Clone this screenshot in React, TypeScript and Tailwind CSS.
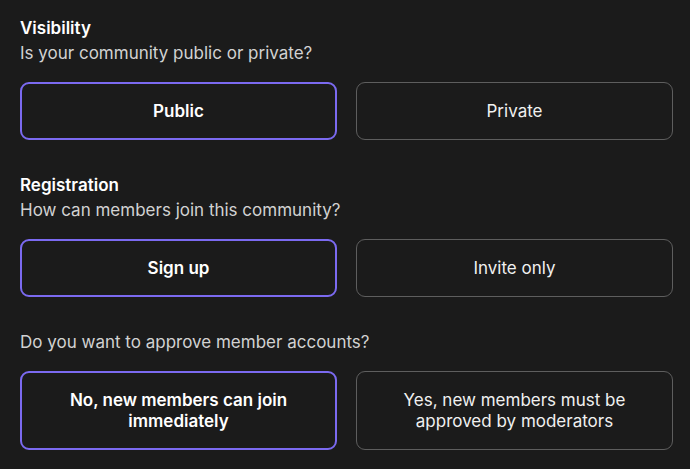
import { useState } from "react";

type Option = { value: string; label: string };

const sections: { key: string; title?: string; question: string; options: Option[] }[] = [
	{
		key: "visibility",
		title: "Visibility",
		question: "Is your community public or private?",
		options: [
			{ value: "public", label: "Public" },
			{ value: "private", label: "Private" },
		],
	},
	{
		key: "registration",
		title: "Registration",
		question: "How can members join this community?",
		options: [
			{ value: "signup", label: "Sign up" },
			{ value: "invite", label: "Invite only" },
		],
	},
	{
		key: "approval",
		question: "Do you want to approve member accounts?",
		options: [
			{ value: "no", label: "No, new members can join immediately" },
			{ value: "yes", label: "Yes, new members must be approved by moderators" },
		],
	},
];

export default function App() {
	const [picked, setPicked] = useState<Record<string, string>>({
		visibility: "public",
		registration: "signup",
		approval: "no",
	});

	return (
		<div
			className="min-h-screen bg-[#1b1b1b] pt-4 pr-[17px] pl-5 text-[17px] leading-[25px] text-white"
			style={{ fontFamily: "Inter, 'Noto Sans', sans-serif" }}
		>
			{sections.map((section, i) => (
				<section key={section.key} className={i > 0 ? "mt-[33px]" : ""}>
					{section.title && <h2 className="font-semibold text-white">{section.title}</h2>}
					<p className="text-[#d2d2d2]">{section.question}</p>
					<div className="mt-4 grid grid-cols-2 gap-[19px]">
						{section.options.map((opt) => {
							const active = picked[section.key] === opt.value;
							return (
								<button
									key={opt.value}
									onClick={() => setPicked({ ...picked, [section.key]: opt.value })}
									className={
										"flex items-center justify-center rounded-[9px] px-[44px] text-center text-[17px] leading-[21px] " +
										(section.key === "approval" ? "h-[79px] " : "h-[58px] ") +
										(active
											? "border-2 border-[#7b6af0] font-semibold text-white"
											: "border border-[#5e5e5e] text-[#f0f0f0]")
									}
								>
									{opt.label}
								</button>
							);
						})}
					</div>
				</section>
			))}
		</div>
	);
}
